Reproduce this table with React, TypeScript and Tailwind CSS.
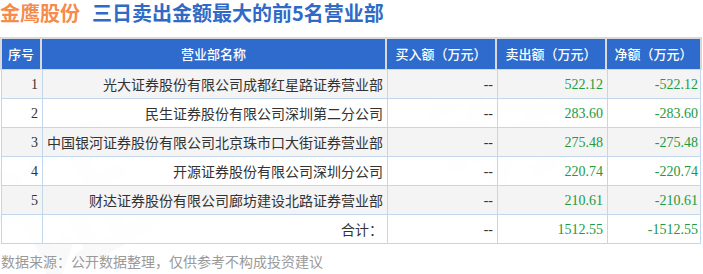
import React from 'react';

interface SellerRow {
  idx: number;
  name: string;
  buy: string;
  sell: string;
  net: string;
}

const ROWS: SellerRow[] = [
  { idx: 1, name: '光大证券股份有限公司成都红星路证券营业部', buy: '--', sell: '522.12', net: '-522.12' },
  { idx: 2, name: '民生证券股份有限公司深圳第二分公司', buy: '--', sell: '283.60', net: '-283.60' },
  { idx: 3, name: '中国银河证券股份有限公司北京珠市口大街证券营业部', buy: '--', sell: '275.48', net: '-275.48' },
  { idx: 4, name: '开源证券股份有限公司深圳分公司', buy: '--', sell: '220.74', net: '-220.74' },
  { idx: 5, name: '财达证券股份有限公司廊坊建设北路证券营业部', buy: '--', sell: '210.61', net: '-210.61' },
];

const CJK = "font-['Noto_Sans_CJK_SC',sans-serif]";
const NUM = "font-['Liberation_Serif','Noto_Sans_CJK_SC',serif]";

const COLS = 'grid grid-cols-[40px_345px_110px_110px_95px]';

export default function App() {
  return (
    <div className={`relative w-[703px] h-[274px] bg-white overflow-hidden ${CJK}`}>
      {/* Watermark (faint, behind content) */}
      <div className="pointer-events-none absolute inset-0 text-black/[0.025] font-bold">
        <span className="absolute left-[-10px] top-[120px] text-[150px] leading-none -rotate-[30deg]">证</span>
        <span className="absolute left-[420px] top-[40px] text-[150px] leading-none -rotate-[30deg]">券</span>
      </div>

      <div className="relative">
        {/* Title */}
        <div className="flex items-center h-[26px] text-[20px] font-bold leading-none">
          <span className="text-[#f58b4c]">金鹰股份</span>
          <span className="ml-[12px] text-[#2f6bc6]">三日卖出金额最大的前5名营业部</span>
        </div>

        {/* Table */}
        <div className="mt-[11px] w-[702px]">
          {/* Header */}
          <div className="bg-[#d9d9d9] pt-[2px] pl-[2px] pr-[2px] pb-[1px]">
            <div className="grid grid-cols-[38px_343px_108px_108px_1fr] gap-[2px] h-[30px] text-white text-[13px] font-medium">
              <div className="bg-[#2e6bcd] flex items-center justify-center">序号</div>
              <div className="bg-[#2e6bcd] flex items-center justify-center">营业部名称</div>
              <div className="bg-[#2e6bcd] flex items-center justify-center">买入额（万元）</div>
              <div className="bg-[#2e6bcd] flex items-center justify-center">卖出额（万元）</div>
              <div className="bg-[#2e6bcd] flex items-center justify-center">净额（万元）</div>
            </div>
          </div>

          {/* Body */}
          <div className="border-l border-r border-[#c3d7ec] ml-[1px] w-[700px]">
            {ROWS.map((r, i) => (
              <div
                key={r.idx}
                className={`${COLS} h-[29px] border-b border-[#c3d7ec] ${i % 2 === 0 ? 'bg-[#f3f3f3]/90' : 'bg-white/90'}`}
              >
                <div className={`flex items-center justify-end pr-[4px] text-[14px] text-[#333] ${NUM}`}>{r.idx}</div>
                <div className="flex items-center justify-end pr-[4px] border-l border-[#c3d7ec] text-[14px] text-[#333] whitespace-nowrap">
                  {r.name}
                </div>
                <div className={`flex items-center justify-end pr-[4px] border-l border-[#c3d7ec] text-[14px] text-[#333] ${NUM}`}>{r.buy}</div>
                <div className={`flex items-center justify-end pr-[4px] border-l border-[#c3d7ec] text-[14px] text-[#229a3e] ${NUM}`}>{r.sell}</div>
                <div className={`flex items-center justify-end pr-[4px] border-l border-[#c3d7ec] text-[14px] text-[#229a3e] ${NUM}`}>{r.net}</div>
              </div>
            ))}
            {/* Total */}
            <div className={`${COLS} h-[29px] border-b border-[#c3d7ec] bg-white/90`}>
              <div />
              <div className="flex items-center justify-end pr-[4px] border-l border-[#c3d7ec] text-[14px] text-[#333]">合计：</div>
              <div className={`flex items-center justify-end pr-[4px] border-l border-[#c3d7ec] text-[14px] text-[#333] ${NUM}`}>--</div>
              <div className={`flex items-center justify-end pr-[4px] border-l border-[#c3d7ec] text-[14px] text-[#229a3e] ${NUM}`}>1512.55</div>
              <div className={`flex items-center justify-end pr-[4px] border-l border-[#c3d7ec] text-[14px] text-[#229a3e] ${NUM}`}>-1512.55</div>
            </div>
          </div>
        </div>

        {/* Footer note */}
        <div className="mt-[10px] pl-[1px] text-[14px] text-[#9a9a9a] leading-none">
          数据来源：公开数据整理，仅供参考不构成投资建议
        </div>
      </div>
    </div>
  );
}
